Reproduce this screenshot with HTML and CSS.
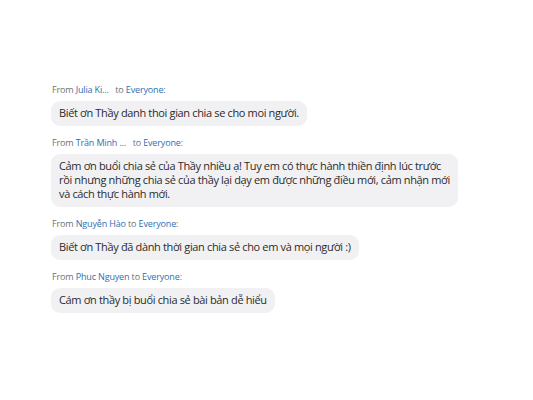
FILE: index.html
```html
<!DOCTYPE html>
<html>
<head>
<meta charset="utf-8">
<link rel="stylesheet" href="styles.css">
</head>
<body>
<div class="chat">
  <div class="msg">
    <div class="from">From <span class="name">Julia Ki...</span>&nbsp;&nbsp; to <span class="name">Everyone</span>:</div>
    <div class="bubble">Biết ơn Thầy danh thoi gian chia se cho moi người.</div>
  </div>
  <div class="msg">
    <div class="from">From <span class="name">Trần Minh ...</span>&nbsp;&nbsp; to <span class="name">Everyone</span>:</div>
    <div class="bubble">Cảm ơn buổi chia sẻ của Thầy nhiều ạ! Tuy em có thực hành thiền định lúc trước<br>rồi nhưng những chia sẻ của thầy lại dạy em được những điều mới, cảm nhận mới<br>và cách thực hành mới.</div>
  </div>
  <div class="msg">
    <div class="from">From <span class="name">Nguyễn Hào</span> to <span class="name">Everyone</span>:</div>
    <div class="bubble">Biết ơn Thầy đã dành thời gian chia sẻ cho em và mọi người :)</div>
  </div>
  <div class="msg">
    <div class="from">From <span class="name">Phuc Nguyen</span> to <span class="name">Everyone</span>:</div>
    <div class="bubble">Cám ơn thầy bị buổi chia sẻ bài bản dễ hiểu</div>
  </div>
</div>
</body>
</html>
```
FILE: styles.css
```css
html, body {
  margin: 0;
  padding: 0;
  background: #ffffff;
}
body {
  width: 533px;
  height: 400px;
  overflow: hidden;
  font-family: "Open Sans", "Noto Sans", sans-serif;
}
.chat {
  padding: 84px 0 0 51px;
  display: flex;
  flex-direction: column;
  align-items: flex-start;
}
.msg {
  display: flex;
  flex-direction: column;
  align-items: flex-start;
  margin-bottom: 11px;
}
.from {
  font-size: 9px;
  line-height: 12px;
  letter-spacing: -0.15px;
  color: #6f6f6f;
  padding-left: 1px;
}
.name {
  color: #2f6fb3;
}
.bubble {
  margin-top: 5px;
  background: #f1f1f4;
  border-radius: 9px;
  padding: 5px 8px 6px 8px;
  font-size: 11px;
  line-height: 14px;
  letter-spacing: -0.35px;
  color: #2b2b2b;
  max-width: 420px;
  white-space: nowrap;
}
```
